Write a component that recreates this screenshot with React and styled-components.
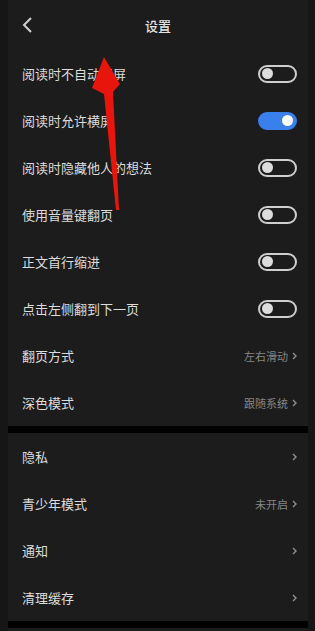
import React from 'react';
import styled, { createGlobalStyle } from 'styled-components';

const Global = createGlobalStyle`
  html, body { margin: 0; padding: 0; background: #161616; }
  body { padding: 0 7px 0 8px; }
  * { box-sizing: border-box; }
`;

const Screen = styled.div`
  position: relative;
  background: #1c1c1c;
  font-family: "Noto Sans CJK SC", "Noto Sans", sans-serif;
  color: #dcdcdc;
  height: 631px;
  overflow: hidden;
`;

const Header = styled.div`
  height: 50px;
  display: flex;
  align-items: center;
  justify-content: center;
  position: relative;
  font-size: 13px;
  font-weight: 500;
  color: #e4e4e4;
`;

const Back = styled.svg`
  position: absolute;
  left: 13px;
  top: 16px;
`;

const Section = styled.div`
  background: #1c1c1c;
  border-bottom: 7px solid #000;
`;

const Row = styled.div`
  height: 47px;
  display: flex;
  align-items: center;
  justify-content: space-between;
  padding: 0 11px 0 14px;
`;

const Label = styled.span`
  font-size: 13px;
  color: #dcdcdc;
`;

const Value = styled.span`
  display: flex;
  align-items: center;
  gap: 4px;
  font-size: 11px;
  color: #858585;
`;

const Switch = styled.div`
  width: 39px;
  height: 18px;
  border-radius: 9px;
  border: 2px solid ${p => (p.$on ? '#3a80ec' : '#cfcfcf')};
  background: ${p => (p.$on ? '#3a80ec' : 'transparent')};
  display: flex;
  align-items: center;
  justify-content: ${p => (p.$on ? 'flex-end' : 'flex-start')};
  padding: 0 2px;
`;

const Knob = styled.div`
  width: 11px;
  height: 11px;
  border-radius: 50%;
  background: ${p => (p.$on ? '#ffffff' : '#dcdcdc')};
`;

const Arrow = styled.svg`
  position: absolute;
  left: -8px;
  top: 0;
  pointer-events: none;
`;

const Chevron = () => (
  <svg width="5" height="8" viewBox="0 0 5 8">
    <path d="M1 1l3 3-3 3" fill="none" stroke="#8f8f8f" strokeWidth="1.4" />
  </svg>
);

const toggles = [
  ['阅读时不自动锁屏', false],
  ['阅读时允许横屏', true],
  ['阅读时隐藏他人的想法', false],
  ['使用音量键翻页', false],
  ['正文首行缩进', false],
  ['点击左侧翻到下一页', false],
];

const links1 = [
  ['翻页方式', '左右滑动'],
  ['深色模式', '跟随系统'],
];

const links2 = [
  ['隐私', ''],
  ['青少年模式', '未开启'],
  ['通知', ''],
  ['清理缓存', ''],
];

export default function App() {
  return (
    <Screen>
      <Global />
      <Header>
        <Back width="14" height="18" viewBox="0 0 14 18">
          <path d="M10 2L3 9l7 7" fill="none" stroke="#d0d0d0" strokeWidth="2" />
        </Back>
        设置
      </Header>
      <Section>
        {toggles.map(([t, on]) => (
          <Row key={t}>
            <Label>{t}</Label>
            <Switch $on={on}>
              <Knob $on={on} />
            </Switch>
          </Row>
        ))}
        {links1.map(([t, v]) => (
          <Row key={t}>
            <Label>{t}</Label>
            <Value>{v}<Chevron /></Value>
          </Row>
        ))}
      </Section>
      <Section>
        {links2.map(([t, v]) => (
          <Row key={t}>
            <Label>{t}</Label>
            <Value>{v}<Chevron /></Value>
          </Row>
        ))}
      </Section>
      <Arrow width="315" height="631" viewBox="0 0 315 631">
        <polygon
          points="104,57 120,84 113,92 119,210 116,210 104,94 92,88"
          fill="#e8150c"
        />
      </Arrow>
    </Screen>
  );
}
